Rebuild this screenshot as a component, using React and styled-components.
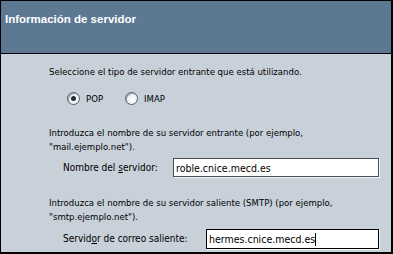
import React from 'react';
import styled, { createGlobalStyle } from 'styled-components';

const Global = createGlobalStyle`
  html, body { margin: 0; padding: 0; background: #c8d0da; }
  body { font-family: "DejaVu Sans Condensed", "DejaVu Sans", sans-serif; font-stretch: condensed; }
`;

const Window = styled.div`
  box-sizing: border-box;
  width: 393px;
  height: 254px;
  border: 1px solid #000;
  border-right-width: 2px;
  border-bottom-width: 2px;
  display: flex;
  flex-direction: column;
  background: #c8d0da;
`;

const Header = styled.header`
  box-sizing: border-box;
  height: 53px;
  background: #5c7893;
  border-bottom: 1px solid #000;
  padding: 11px 4px 0;
`;

const Title = styled.h1`
  margin: 0;
  font-family: "Liberation Sans", Arial, sans-serif;
  font-stretch: normal;
  font-size: 11.5px;
  line-height: 14px;
  font-weight: bold;
  color: #fff;
`;

const Body = styled.main`
  flex: 1;
  padding: 11px 12px 0 48px;
  color: #000;
  font-size: 9.5px;
  line-height: 14px;
`;

const Para = styled.p`
  margin: ${p => p.$top || 0}px 0 0;
`;

const RadioRow = styled.div`
  display: flex;
  align-items: center;
  gap: 22px;
  margin-top: 13px;
  padding-left: 18px;
  height: 13px;
`;

const Option = styled.label`
  display: flex;
  align-items: center;
  gap: 6px;
`;

const Radio = styled.span`
  box-sizing: border-box;
  width: 13px;
  height: 13px;
  border-radius: 50%;
  border: 1px solid #5a5f66;
  background: radial-gradient(circle at 60% 60%, #ffffff 0%, #e6edf3 70%, #cfd8e0 100%);
  box-shadow: inset 1px 1px 0 #9aa3ad;
  display: flex;
  align-items: center;
  justify-content: center;
  &::after {
    content: "";
    display: ${p => (p.$checked ? 'block' : 'none')};
    width: 5px;
    height: 5px;
    border-radius: 50%;
    background: #2b2f35;
  }
`;

const FieldRow = styled.div`
  display: flex;
  align-items: center;
  margin-top: ${p => p.$top}px;
  padding-left: 14px;
  height: ${p => p.$h}px;
`;

const Label = styled.span`
  flex: 0 0 ${p => p.$w}px;
  white-space: nowrap;
  font-size: 10px;
  u { text-decoration: underline; }
`;

const Field = styled.div`
  box-sizing: border-box;
  flex: 1;
  height: 100%;
  background: #fff;
  border: 1px solid ${p => (p.$focused ? '#000' : '#4a4e56')};
  box-shadow: 1px 1px 0 #f4f6f8;
  padding: 0 2px;
  display: flex;
  align-items: center;
  font-size: 10.5px;
  white-space: nowrap;
`;

const Caret = styled.span`
  display: inline-block;
  width: 1px;
  height: 13px;
  background: #000;
`;

export default function App() {
  return (
    <>
      <Global />
      <Window>
        <Header>
          <Title>Información de servidor</Title>
        </Header>
        <Body>
          <Para>Seleccione el tipo de servidor entrante que está utilizando.</Para>
          <RadioRow>
            <Option><Radio $checked />POP</Option>
            <Option><Radio />IMAP</Option>
          </RadioRow>
          <Para $top={21}>
            Introduzca el nombre de su servidor entrante (por ejemplo,<br />
            "mail.ejemplo.net").
          </Para>
          <FieldRow $top={4} $h={19}>
            <Label $w={110}>Nombre del <u>s</u>ervidor:</Label>
            <Field>roble.cnice.mecd.es</Field>
          </FieldRow>
          <Para $top={19}>
            Introduzca el nombre de su servidor saliente (SMTP) (por ejemplo,<br />
            "smtp.ejemplo.net").
          </Para>
          <FieldRow $top={5} $h={20}>
            <Label $w={143}>Servid<u>o</u>r de correo saliente:</Label>
            <Field $focused>hermes.cnice.mecd.es<Caret /></Field>
          </FieldRow>
        </Body>
      </Window>
    </>
  );
}
